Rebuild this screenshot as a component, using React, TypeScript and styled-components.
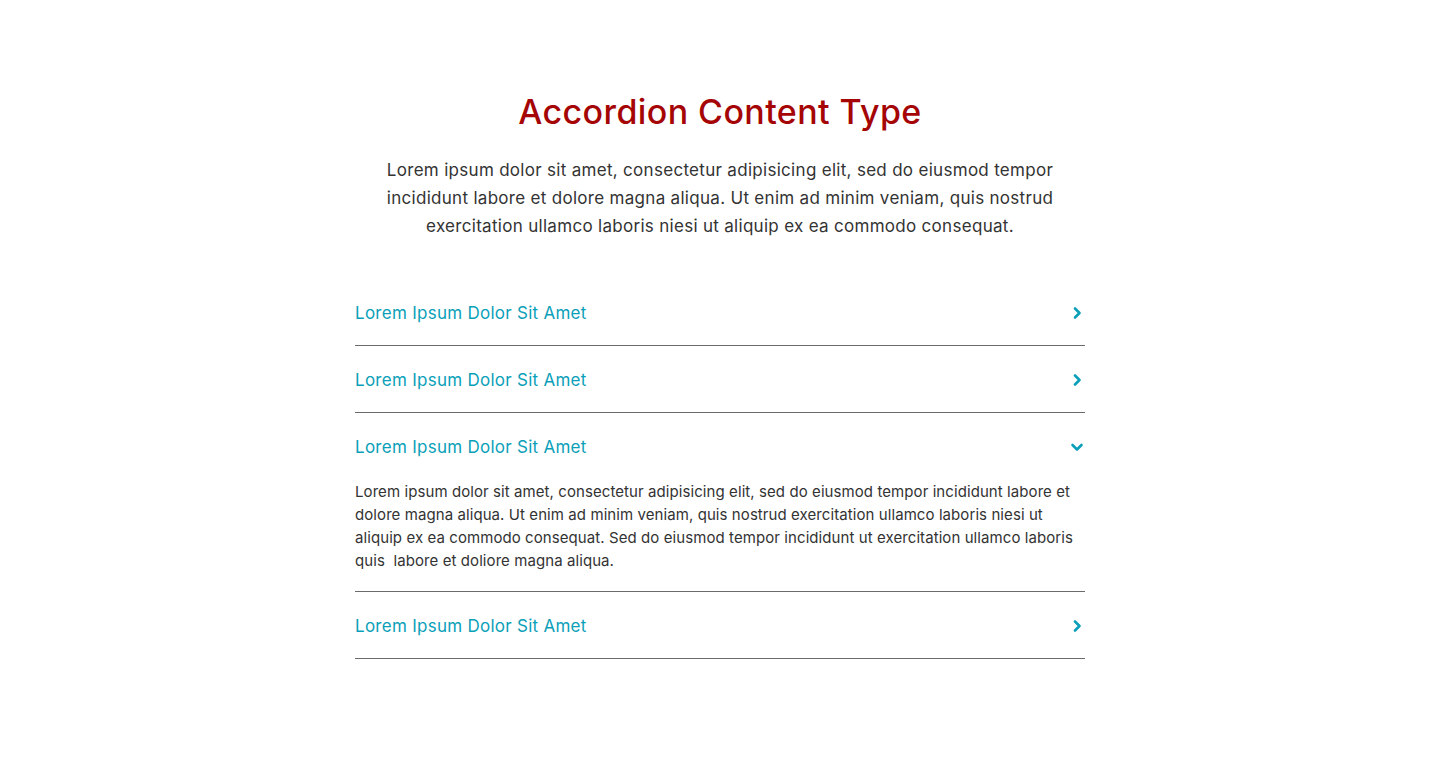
import React, { useState } from "react";
import styled, { createGlobalStyle } from "styled-components";

const Global = createGlobalStyle`
  html, body { margin: 0; padding: 0; background: #fff; }
  body { font-family: "Inter", "Noto Sans", sans-serif; -webkit-font-smoothing: antialiased; }
`;

const Page = styled.main`
  display: flex;
  flex-direction: column;
  align-items: center;
  padding-top: 88px;
`;

const Title = styled.h1`
  margin: 0;
  font-size: 34px;
  line-height: 48px;
  font-weight: 500;
  letter-spacing: 0.4px;
  color: #a50505;
  text-align: center;
`;

const Intro = styled.p`
  margin: 20px 0 0;
  width: 700px;
  font-size: 17px;
  line-height: 28px;
  letter-spacing: 0.3px;
  color: #333;
  text-align: center;
`;

const List = styled.section`
  width: 730px;
  margin-top: 39px;
`;

const Item = styled.div`
  border-bottom: 1px solid #6b6b6b;
`;

const Header = styled.button`
  all: unset;
  box-sizing: border-box;
  width: 100%;
  height: 66px;
  padding-top: 2px;
  display: flex;
  align-items: center;
  justify-content: space-between;
  cursor: pointer;
  font-family: inherit;
  font-size: 17px;
  letter-spacing: 0.27px;
  color: #0b9fb9;
`;

const Chevron = styled.svg<{ $open: boolean }>`
  width: 16px;
  height: 16px;
  transform: rotate(${(p) => (p.$open ? 90 : 0)}deg);
`;

const Body = styled.div`
  padding: 1px 0 19px;
  font-size: 15px;
  line-height: 23px;
  letter-spacing: 0.08px;
  color: #333;
`;

const items = [
  "Lorem Ipsum Dolor Sit Amet",
  "Lorem Ipsum Dolor Sit Amet",
  "Lorem Ipsum Dolor Sit Amet",
  "Lorem Ipsum Dolor Sit Amet",
];

export default function App() {
  const [open, setOpen] = useState<number | null>(2);
  return (
    <>
      <Global />
      <Page>
        <Title>Accordion Content Type</Title>
        <Intro>
          Lorem ipsum dolor sit amet, consectetur adipisicing elit, sed do eiusmod tempor incididunt labore et dolore magna aliqua. Ut enim ad minim veniam, quis nostrud exercitation ullamco laboris niesi ut aliquip ex ea commodo consequat.
        </Intro>
        <List>
          {items.map((t, i) => (
            <Item key={i}>
              <Header onClick={() => setOpen(open === i ? null : i)}>
                <span>{t}</span>
                <Chevron $open={open === i} viewBox="0 0 16 16">
                  <path d="M6 3.5 L10.5 8 L6 12.5" fill="none" stroke="#0b9fb9" strokeWidth="2.6" strokeLinecap="round" strokeLinejoin="round" />
                </Chevron>
              </Header>
              {open === i && (
                <Body>
                  Lorem ipsum dolor sit amet, consectetur adipisicing elit, sed do eiusmod tempor incididunt labore et dolore magna aliqua. Ut enim ad minim veniam, quis nostrud exercitation ullamco laboris niesi ut aliquip ex ea commodo consequat. Sed do eiusmod tempor incididunt ut exercitation ullamco laboris quis&nbsp; labore et doliore magna aliqua.
                </Body>
              )}
            </Item>
          ))}
        </List>
      </Page>
    </>
  );
}
